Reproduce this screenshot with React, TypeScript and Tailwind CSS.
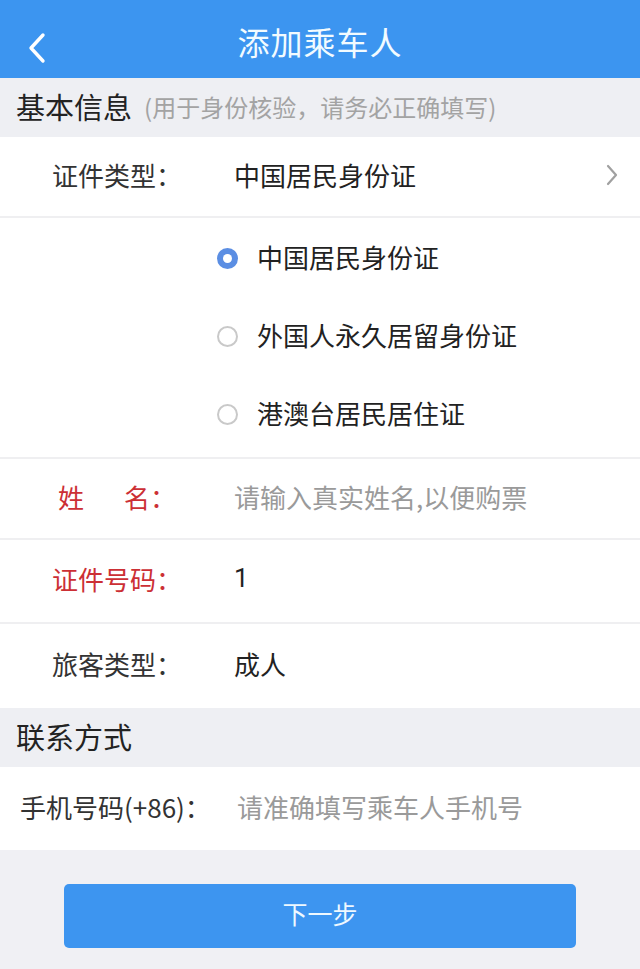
import React, { useState } from "react";

type Option = { id: string; label: string };

const idTypes: Option[] = [
  { id: "cn", label: "中国居民身份证" },
  { id: "foreign", label: "外国人永久居留身份证" },
  { id: "hmt", label: "港澳台居民居住证" },
];

const font = { fontFamily: '"Noto Sans CJK SC", "Noto Sans", sans-serif' };

// 单选圆圈
function Radio({ checked }: { checked: boolean }) {
  return checked ? (
    <span className="flex h-[21px] w-[21px] items-center justify-center rounded-full bg-[#5b8ee3]">
      <span className="h-[9px] w-[9px] rounded-full bg-white" />
    </span>
  ) : (
    <span className="h-[21px] w-[21px] rounded-full border-2 border-[#c9c9c9] bg-white" />
  );
}

function Row({
  label,
  children,
  red,
  height = "h-[82px]",
}: {
  label: React.ReactNode;
  children?: React.ReactNode;
  red?: boolean;
  height?: string;
}) {
  return (
    <div className={`flex ${height} items-center border-b-2 border-[#efeff1] bg-white pb-[5px] pl-[52px] pr-5`}>
      <div className={`w-[182px] shrink-0 text-[26px] ${red ? "text-[#cc2f35]" : "text-[#333]"}`}>{label}</div>
      <div className="flex min-w-0 flex-1 items-center text-[26px] text-[#222]">{children}</div>
    </div>
  );
}

export default function App() {
  const [idType, setIdType] = useState("cn");

  return (
    <div className="flex min-h-[969px] w-[640px] flex-col bg-[#f0f0f4]" style={font}>
      {/* 顶部导航 */}
      <div className="relative flex h-[78px] items-center justify-center bg-[#3c95f0]">
        <button className="absolute left-[22px] top-[27px] p-1">
          <svg width="22" height="34" viewBox="0 0 22 34" fill="none">
            <path d="M17 4 L5 17 L17 30" stroke="white" strokeWidth="3.4" strokeLinecap="round" strokeLinejoin="round" />
          </svg>
        </button>
        <h1 className="pt-[4px] text-[32px] font-normal tracking-[1px] text-[#f2fbff]">添加乘车人</h1>
      </div>

      {/* 基本信息 */}
      <div className="flex h-[59px] items-center bg-[#eeeff3] px-4 pb-[2px]">
        <span className="text-[29px] text-[#222]">基本信息</span>
        <span className="ml-3 text-[24px] text-[#a3a3a3]">(用于身份核验，请务必正确填写)</span>
      </div>

      <Row label="证件类型：" height="h-[81px]">
        <span>中国居民身份证</span>
        <svg className="ml-auto mr-[1px] mt-[2px]" width="14" height="22" viewBox="0 0 14 22" fill="none">
          <path d="M3 2 L11 11 L3 20" stroke="#a0a0a0" strokeWidth="2.2" strokeLinecap="round" strokeLinejoin="round" />
        </svg>
      </Row>

      {/* 证件类型选项 */}
      <div className="flex flex-col border-b-2 border-[#efeff1] bg-white pt-[1px] pb-[4px] pl-[217px]">
        {idTypes.map((o) => (
          <div
            key={o.id}
            className="flex h-[78px] cursor-pointer items-center gap-[19px]"
            onClick={() => setIdType(o.id)}
          >
            <Radio checked={idType === o.id} />
            <span className="-mt-[3px] text-[26px] text-[#222]">{o.label}</span>
          </div>
        ))}
      </div>

      <Row
        red
        label={
          <span className="pl-[6px]">
            姓<span className="ml-[40px]">名：</span>
          </span>
        }
        height="h-[81px]"
      >
        <span className="text-[#9a9a9a]">请输入真实姓名,以便购票</span>
      </Row>
      <Row red label="证件号码：" height="h-[84px]">
        <span style={{ fontFamily: '"Roboto", "Noto Sans CJK SC", sans-serif' }}>1</span>
      </Row>
      <div className="flex h-[84px] items-center bg-white pb-[5px] pl-[52px] pr-5">
        <div className="w-[182px] shrink-0 text-[26px] text-[#333]">旅客类型：</div>
        <div className="text-[26px] text-[#222]">成人</div>
      </div>

      {/* 联系方式 */}
      <div className="flex h-[59px] items-center bg-[#eeeff3] px-4 pb-[2px]">
        <span className="text-[29px] text-[#222]">联系方式</span>
      </div>
      <div className="flex h-[83px] items-center bg-white pb-[5px] pl-5 pr-5">
        <div className="w-[217px] shrink-0 text-[26px] text-[#333]">手机号码(+86)：</div>
        <div className="text-[26px] text-[#9a9a9a]">请准确填写乘车人手机号</div>
      </div>

      {/* 下一步 */}
      <div className="flex justify-center pt-[34px]">
        <button className="h-[64px] w-[512px] rounded-[5px] bg-[#3d95f0] pb-[4px] text-[25px] text-[#eef8ff]">下一步</button>
      </div>
    </div>
  );
}
